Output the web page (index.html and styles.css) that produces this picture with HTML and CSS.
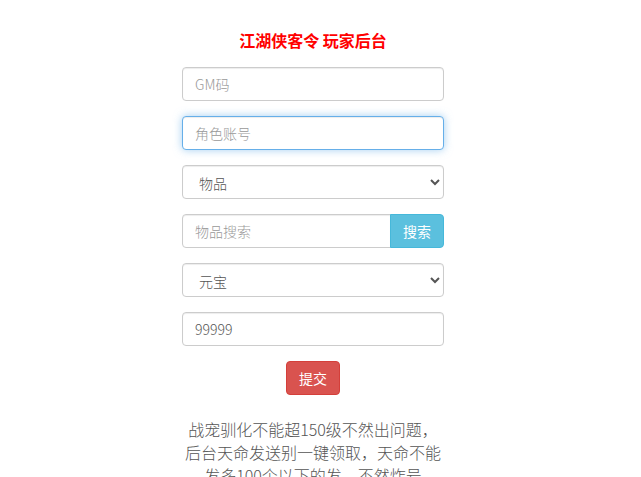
FILE: index.html
```html
<!DOCTYPE html>
<html lang="zh-CN">
<head>
<meta charset="utf-8">
<title>江湖侠客令 玩家后台</title>
<link rel="stylesheet" href="styles.css">
</head>
<body>
<div class="page">
  <h1 class="title">江湖侠客令 玩家后台</h1>
  <form class="panel">
    <div class="group"><input class="control" type="text" placeholder="GM码"></div>
    <div class="group"><input class="control is-focus" type="text" placeholder="角色账号"></div>
    <div class="group">
      <select class="control select"><option>物品</option></select>
    </div>
    <div class="group input-group">
      <input class="control grow" type="text" placeholder="物品搜索">
      <button type="button" class="btn btn-info addon">搜索</button>
    </div>
    <div class="group">
      <select class="control select"><option>元宝</option></select>
    </div>
    <div class="group"><input class="control" type="text" value="99999"></div>
    <div class="actions"><button type="button" class="btn btn-danger">提交</button></div>
  </form>
  <p class="note">战宠驯化不能超150级不然出问题，后台天命发送别一键领取，天命不能发多100个以下的发，不然炸号</p>
</div>
</body>
</html>
```

FILE: styles.css
```css
* { box-sizing: border-box; }
html, body { margin: 0; padding: 0; background: #fff; }
body {
  font-family: "Noto Sans CJK SC", "Noto Sans", sans-serif;
  font-size: 14px;
  color: #333;
}
.page {
  width: 626px;
  display: flex;
  flex-direction: column;
  align-items: center;
}
.title {
  margin: 30px 0 17px;
  font-size: 16px;
  line-height: 20px;
  font-weight: 700;
  color: #f00;
}
.panel {
  width: 262px;
  display: flex;
  flex-direction: column;
}
.group { margin-bottom: 15px; display: flex; }
.control {
  display: block;
  width: 100%;
  height: 34px;
  padding: 6px 12px;
  font-family: "Noto Sans CJK SC", "Noto Sans", sans-serif;
  font-size: 14px;
  font-weight: 300;
  line-height: 20px;
  color: #555;
  background: #fff;
  border: 1px solid #ccc;
  border-radius: 4px;
  box-shadow: inset 0 1px 1px rgba(0,0,0,.075);
  outline: none;
}
.control::placeholder { color: #999; }
.is-focus {
  border-color: #66afe9;
  box-shadow: inset 0 1px 1px rgba(0,0,0,.075), 0 0 8px rgba(102,175,233,.6);
}
.select { padding: 6px 12px; }
.input-group .grow {
  flex: 1;
  border-top-right-radius: 0;
  border-bottom-right-radius: 0;
}
.btn {
  height: 34px;
  padding: 6px 12px;
  font-family: "Noto Sans CJK SC", "Noto Sans", sans-serif;
  font-size: 14px;
  line-height: 20px;
  color: #fff;
  border: 1px solid transparent;
  border-radius: 4px;
  cursor: pointer;
}
.btn-info { background: #5bc0de; border-color: #46b8da; }
.addon {
  width: 54px;
  flex: none;
  margin-left: -1px;
  border-top-left-radius: 0;
  border-bottom-left-radius: 0;
}
.btn-danger { background: #d9534f; border-color: #d43f3a; width: 54px; }
.actions { display: flex; justify-content: center; }
.note {
  width: 262px;
  margin: 23px 0 0;
  font-size: 16px;
  font-weight: 300;
  line-height: 23px;
  color: #555;
  text-align: center;
}
```
